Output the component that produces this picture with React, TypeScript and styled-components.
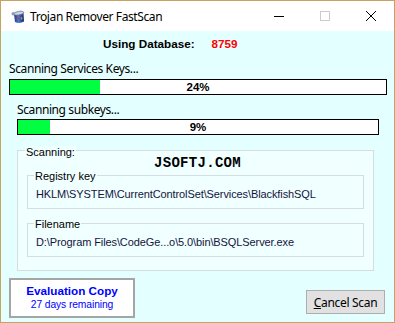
import React from 'react';
import styled, { createGlobalStyle } from 'styled-components';

const GlobalStyle = createGlobalStyle`
  *, *::before, *::after { box-sizing: border-box; }
  html, body { margin: 0; padding: 0; background: #ffffff; }
  body { font-family: "Liberation Sans", Arial, sans-serif; }
`;

const uiFont = `"Noto Sans", "Open Sans", sans-serif`;
const classicFont = `"Liberation Sans", Arial, sans-serif`;

const Window = styled.div`
  width: 395px;
  height: 323px;
  border: 1px solid #c9a160;
  display: flex;
  flex-direction: column;
  background: #ffffff;
  overflow: hidden;
`;

const TitleBar = styled.div`
  height: 30px;
  flex: none;
  display: flex;
  align-items: center;
  background: #ffffff;
`;

const AppIcon = styled.svg`
  margin-left: 9px;
  width: 16px;
  height: 16px;
  flex: none;
`;

const Title = styled.span`
  flex: 1;
  margin-left: 4px;
  font-family: ${uiFont};
  font-size: 12px;
  letter-spacing: -0.4px;
  color: #000000;
  white-space: nowrap;
`;

const CaptionButton = styled.div`
  width: 46px;
  height: 30px;
  flex: none;
  display: flex;
  align-items: center;
  justify-content: center;
`;

const Client = styled.div`
  flex: 1;
  background: #e4ffff;
  padding: 6px 7px 0 8px;
  display: flex;
  flex-direction: column;
`;

const DbRow = styled.div`
  height: 14px;
  display: flex;
  gap: 17px;
  padding-left: 94px;
  font-family: ${classicFont};
  font-weight: bold;
  font-size: 11.7px;
  line-height: 14px;
  color: #000000;
`;

const DbValue = styled.span`
  color: #ff0000;
`;

const StepLabel = styled.div<{ $top: number; $indent: number }>`
  margin-top: ${(p) => p.$top}px;
  margin-left: ${(p) => p.$indent}px;
  font-family: ${uiFont};
  font-size: 12px;
  letter-spacing: -0.4px;
  line-height: 15px;
  height: 15px;
  color: #000000;
`;

const Bar = styled.div<{ $top: number; $indent: number }>`
  position: relative;
  margin-top: ${(p) => p.$top}px;
  margin-left: ${(p) => p.$indent}px;
  margin-right: ${(p) => p.$indent}px;
  height: 16px;
  border: 1px solid #000000;
  background: #ffffff;
`;

const BarFill = styled.div`
  height: 100%;
  background: #00ff40;
`;

const BarText = styled.div`
  position: absolute;
  inset: 0;
  display: flex;
  align-items: center;
  justify-content: center;
  font-family: ${classicFont};
  font-weight: bold;
  font-size: 11.5px;
  color: #000000;
`;

const OuterGroup = styled.div`
  position: relative;
  margin: 15px 13px 0 8px;
  border: 1px solid #d5dde0;
  background: #f0ffff;
  padding: 0 9px 13px;
`;

const GroupLabel = styled.span<{ $top: number; $left: number }>`
  position: absolute;
  top: ${(p) => p.$top}px;
  left: ${(p) => p.$left}px;
  padding: 0 1px;
  background: #f0ffff;
  font-family: ${classicFont};
  font-size: 11px;
  line-height: 13px;
  color: #000000;
`;

const Watermark = styled.div`
  height: 24px;
  line-height: 24px;
  padding-left: 4px;
  text-align: center;
  font-family: "Liberation Mono", "DejaVu Sans Mono", monospace;
  font-weight: bold;
  font-size: 14px;
  letter-spacing: 0.3px;
  color: #000000;
`;

const InnerGroup = styled.div<{ $top: number }>`
  position: relative;
  margin-top: ${(p) => p.$top}px;
  height: 34px;
  border: 1px solid #d5dde0;
  padding: 12px 0 0 8px;
`;

const Value = styled.div`
  font-family: ${classicFont};
  font-size: 11px;
  letter-spacing: -0.1px;
  line-height: 13px;
  color: #14143c;
  white-space: nowrap;
`;

const BottomRow = styled.div`
  margin-top: 7px;
  display: flex;
  justify-content: space-between;
  align-items: flex-end;
`;

const EvalBox = styled.div`
  width: 126px;
  height: 40px;
  border: 2px solid #a5a5a5;
  background: #ffffff;
  padding-top: 4px;
  text-align: center;
  color: #0000ff;
  font-family: ${classicFont};
`;

const EvalTitle = styled.div`
  font-weight: bold;
  font-size: 11.7px;
  line-height: 14px;
`;

const EvalSub = styled.div`
  font-size: 10.3px;
  letter-spacing: -0.1px;
  line-height: 13px;
`;

const Button = styled.button`
  width: 79px;
  height: 24px;
  margin: 0 2px 4px 0;
  padding: 0;
  border: 1px solid #adadad;
  background: #e1e1e1;
  font-family: ${uiFont};
  font-size: 12px;
  letter-spacing: -0.3px;
  color: #000000;
  cursor: default;
`;

const Mnemonic = styled.span`
  text-decoration: underline;
`;

function Progress({ value, top, indent }: { value: number; top: number; indent: number }) {
  return (
    <Bar $top={top} $indent={indent}>
      <BarFill style={{ width: `${value}%` }} />
      <BarText>{value}%</BarText>
    </Bar>
  );
}

export default function App() {
  return (
    <>
      <GlobalStyle />
      <Window>
        <TitleBar>
          <AppIcon viewBox="0 0 16 16">
            <defs>
              <linearGradient id="jar" x1="0" x2="1" y1="0" y2="0">
                <stop offset="0" stopColor="#1a3a86" />
                <stop offset="0.45" stopColor="#4a7ad6" />
                <stop offset="1" stopColor="#132c66" />
              </linearGradient>
            </defs>
            <path d="M4 6 L13.5 4.5 L14 13.5 Q9.5 16 5 14 Z" fill="url(#jar)" />
            <ellipse cx="8.8" cy="5.2" rx="4.9" ry="1.8" fill="#c9d5e6" stroke="#4a5570" strokeWidth="0.6" transform="rotate(-9 8.8 5.2)" />
            <circle cx="3.2" cy="5.8" r="1.7" fill="#8e9bb0" />
            <path d="M7 8.5 L9.5 9.5 L8 12 Z" fill="#d8402e" />
            <path d="M11 9 L12.5 10 L11.5 12 Z" fill="#f0c040" />
          </AppIcon>
          <Title>Trojan Remover FastScan</Title>
          <CaptionButton>
            <svg width="10" height="10" viewBox="0 0 10 10">
              <path d="M0 5.5 H10" stroke="#000" strokeWidth="1" />
            </svg>
          </CaptionButton>
          <CaptionButton>
            <svg width="10" height="10" viewBox="0 0 10 10">
              <rect x="0.5" y="0.5" width="9" height="9" fill="none" stroke="#cccccc" strokeWidth="1" />
            </svg>
          </CaptionButton>
          <CaptionButton>
            <svg width="10" height="10" viewBox="0 0 10 10">
              <path d="M0 0 L10 10 M10 0 L0 10" stroke="#000" strokeWidth="1" />
            </svg>
          </CaptionButton>
        </TitleBar>
        <Client>
          <DbRow>
            <span>Using Database:</span>
            <DbValue>8759</DbValue>
          </DbRow>
          <StepLabel $top={10} $indent={0}>Scanning Services Keys...</StepLabel>
          <Progress value={24} top={3} indent={0} />
          <StepLabel $top={7} $indent={8}>Scanning subkeys...</StepLabel>
          <Progress value={9} top={2} indent={8} />
          <OuterGroup>
            <GroupLabel $top={-5} $left={7}>Scanning:</GroupLabel>
            <Watermark>JSOFTJ.COM</Watermark>
            <InnerGroup $top={0}>
              <GroupLabel $top={-6} $left={6}>Registry key</GroupLabel>
              <Value>HKLM\SYSTEM\CurrentControlSet\Services\BlackfishSQL</Value>
            </InnerGroup>
            <InnerGroup $top={14}>
              <GroupLabel $top={-6} $left={6}>Filename</GroupLabel>
              <Value>D:\Program Files\CodeGe...o\5.0\bin\BSQLServer.exe</Value>
            </InnerGroup>
          </OuterGroup>
          <BottomRow>
            <EvalBox>
              <EvalTitle>Evaluation Copy</EvalTitle>
              <EvalSub>27 days remaining</EvalSub>
            </EvalBox>
            <Button>
              <Mnemonic>C</Mnemonic>ancel Scan
            </Button>
          </BottomRow>
        </Client>
      </Window>
    </>
  );
}
